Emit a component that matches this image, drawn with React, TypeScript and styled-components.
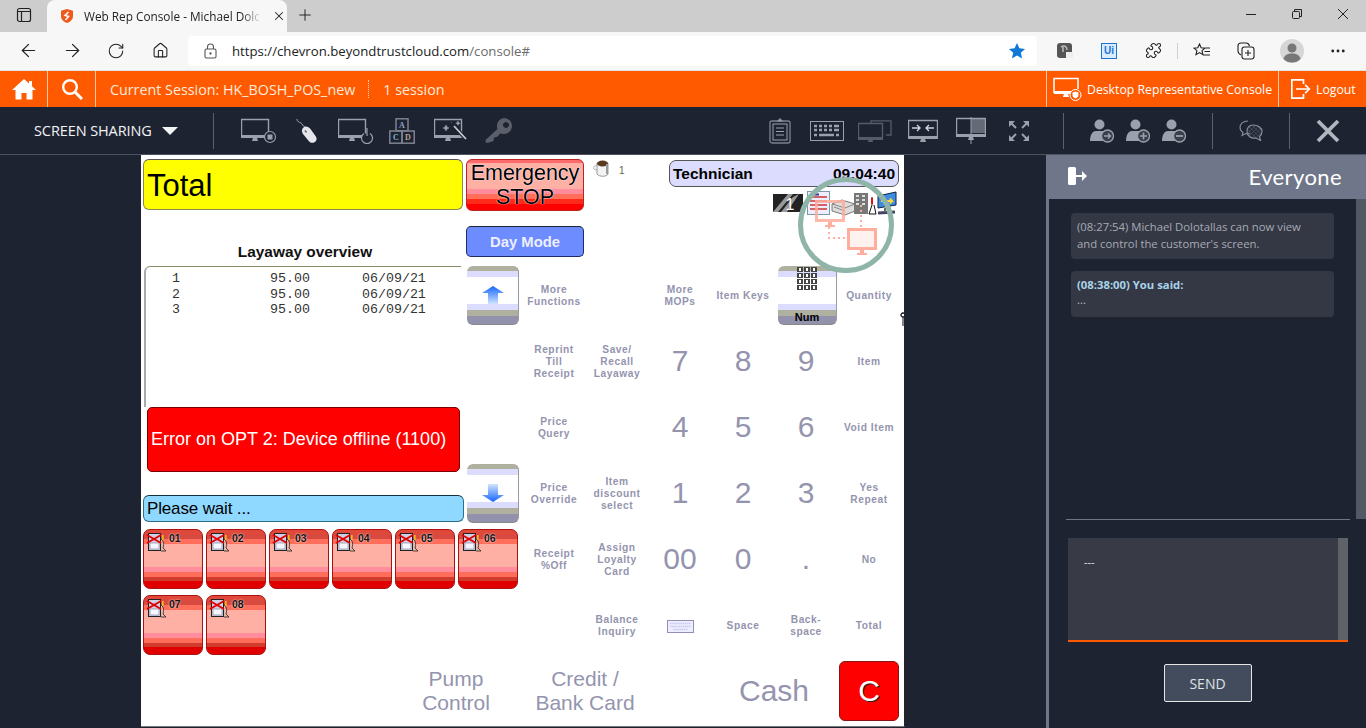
import React from "react";
import styled, { createGlobalStyle } from "styled-components";
import { ArrowLeft, ArrowRight, RotateCw, House, Plus, X, Puzzle, Ellipsis } from "lucide-react";

const Global = createGlobalStyle`
  html, body { margin: 0; padding: 0; height: 728px; overflow: hidden; background: #1e2332; }
  body { font-family: "Open Sans", "Liberation Sans", sans-serif; }
  * { box-sizing: border-box; }
`;

const Page = styled.div`width: 1366px; height: 728px; display: flex; flex-direction: column; overflow: hidden;`;

/* browser chrome */
const TabStrip = styled.div`height: 32px; background: #cdcdcd; display: flex; align-items: flex-end; flex: none; color: #222;`;
const TabSide = styled.div`width: 47px; height: 32px; display: flex; align-items: center; justify-content: center; padding-bottom: 2px;`;
const Tab = styled.div`
  width: 240px; height: 32px; background: #f7f7f7; border-radius: 8px 8px 0 0;
  display: flex; align-items: center; padding-left: 12px; gap: 9px; position: relative;
`;
const TabTitle = styled.div`
  width: 175px; font: 11.8px "Open Sans", sans-serif; color: #222; white-space: nowrap;
  -webkit-mask-image: linear-gradient(90deg, #000 90%, rgba(0,0,0,.15) 100%);
  mask-image: linear-gradient(90deg, #000 90%, rgba(0,0,0,.15) 100%);
`;
const TabClose = styled.div`display: flex; margin-left: 4px; color: #222;`;
const NewTab = styled.div`width: 36px; height: 32px; display: flex; align-items: center; justify-content: center; padding-bottom: 2px;`;
const WindowControls = styled.div`margin-left: auto; display: flex; height: 32px; align-items: center; gap: 36px; padding: 0 18px 4px 0;`;

const AddressRow = styled.div`
  height: 39px; flex: none; background: #f7f7f7; border-bottom: 1px solid #e2e2e2;
  display: flex; align-items: center; color: #222; padding-bottom: 1px;
`;
const NavButton = styled.div<{ $w: number }>`width: ${p => p.$w}px; display: flex; justify-content: center; align-items: center; flex: none;`;
const NavGroup = styled.div`display: flex; width: 188px; padding-left: 6px; flex: none;`;
const Omnibox = styled.div`
  width: 849px; height: 30px; background: #fff; border-radius: 4px; display: flex; align-items: center;
  padding: 0 11px 0 16px; flex: none;
`;
const Url = styled.div`margin-left: 15px; font: 13.2px "Open Sans", sans-serif; color: #222; flex: 1; white-space: nowrap;`;
const UrlDim = styled.span`color: #6b6b6b;`;
const ExtBar = styled.div`display: flex; align-items: center; margin-left: 6px;`;
const Sep = styled.div`width: 1px; height: 16px; background: #cfcfcf; flex: none; margin-left: 2px;`;
const UiBadge = styled.div`
  width: 16px; height: 16px; border: 1.5px solid #1a73d8; color: #1a73d8; font: bold 10px "Liberation Sans", sans-serif;
  display: flex; align-items: center; justify-content: center; background: #dcecff;
`;

/* orange bar */
const OrangeBar = styled.div`height: 36px; flex: none; background: #ff5a00; display: flex; align-items: stretch; color: #fff;`;
const OrangeCell = styled.div<{ $w: number }>`
  width: ${p => p.$w}px; border-right: 1px solid #ffc7a3; display: flex; align-items: center; justify-content: center; flex: none;
`;
const SessionText = styled.div`margin-left: 14px; font-size: 14.3px; display: flex; align-items: center; white-space: nowrap; color: #ffeadb;`;
const DotSep = styled.div`width: 0; height: 18px; border-left: 1px dotted #ffd3b8; margin: 0 14px 0 13px;`;
const OrangeRight = styled.div`margin-left: auto; display: flex;`;
const OrangeLink = styled.div<{ $w: number; $gap: number }>`
  width: ${p => p.$w}px; border-left: 1px solid #ffc7a3; display: flex; align-items: center; padding-left: 6px;
  gap: ${p => p.$gap}px; font-size: 12.25px; white-space: nowrap; color: #fff;
`;

/* toolbar */
const Toolbar = styled.div`
  height: 48px; flex: none; background: #1e2332; border-bottom: 1px solid #4d5260; display: flex; align-items: center; position: relative;
`;
const ModeLabel = styled.div`
  margin-left: 34px; width: 179px; display: flex; align-items: center; gap: 10px; color: #f2f3f5; font-size: 14.5px; white-space: nowrap; letter-spacing: -.1px;
`;
const Caret = styled.div`width: 0; height: 0; border-left: 8px solid transparent; border-right: 8px solid transparent; border-top: 8px solid #f2f3f5;`;
const VLine = styled.div<{ $ml: number }>`width: 1px; height: 36px; background: #596071; margin-left: ${p => p.$ml}px; flex: none;`;
const ToolIcon = styled.svg<{ $ml: number }>`margin-left: ${p => p.$ml}px; flex: none; display: block;`;

const C = "#9ba0ad";
const Screen = ({ w = 27, h = 19, x = 1, y = 1, c = C }: { w?: number; h?: number; x?: number; y?: number; c?: string }) => (
  <g>
    <path d={`M${x + .5} ${y + h - 3}V${y + .5}H${x + w - .5}V${y + h - 3}`} fill="none" stroke={c} strokeWidth="1.4" />
    <rect x={x} y={y + h - 4} width={w} height="3" fill={c} />
    <path d={`M${x + w / 2 - 2} ${y + h - 1}h4l1 3h-6z`} fill={c} />
  </g>
);

/* main */
const Main = styled.div`flex: 1; display: flex; min-height: 0;`;
const Stage = styled.div`width: 1046px; padding-left: 141px; flex: none; background: #1e2332;`;
const Pos = styled.div`
  width: 764px; height: 572px; background: #fff; padding: 4px 0 0 2px; position: relative; overflow: hidden;
  border-right: 1px solid #222; border-bottom: 1px solid #777;
  display: grid; align-content: start; justify-content: start;
  grid-template-columns: repeat(6, 63px) 3px repeat(6, 63px);
  grid-template-rows: 106px repeat(7, 66px);
  font-family: "Liberation Sans", Arial, sans-serif;
`;
const TotalBox = styled.div`
  grid-area: 1 / 1 / 2 / 7; align-self: start; width: 320px; height: 51px; background: #ffff00; border-radius: 6px;
  border: 1px solid #8a8a50; border-top-color: #555; display: flex; align-items: center; padding: 2px 0 0 3px;
  font-size: 31px; color: #000;
`;
const LayawayTitle = styled.div`
  grid-area: 1 / 1 / 2 / 7; align-self: end; width: 324px; text-align: center; font-weight: bold; font-size: 15.4px; color: #111; padding-bottom: 4px;
`;
const EmergencyBtn = styled.div`
  grid-area: 1 / 6 / 2 / 9; align-self: start; margin-left: 8px; width: 118px; height: 52px; border-radius: 6px; border: 1px solid #b22;
  background: linear-gradient(#ff6a6a 0 3px, #ffb0a5 3px 29px, #ff8d9d 29px 34px, #ff6e5a 34px 39px, #ff2a1a 39px 44px, #f00 44px);
  display: flex; align-items: center; justify-content: center; text-align: center; font-size: 21.5px; line-height: 24px; color: #000;
  text-shadow: 0 0 1px #fff, 0 0 1px #fff;
`;
const DayBtn = styled.div`
  grid-area: 1 / 6 / 2 / 9; align-self: start; margin: 67px 0 0 8px; width: 118px; height: 31px; border-radius: 5px; background: #6c8cff;
  border: 1px solid #1d2b66; border-top-color: #223; color: #eef; font-weight: bold; font-size: 14.8px;
  display: flex; align-items: center; justify-content: center;
`;
const CupWrap = styled.div`
  grid-area: 1 / 8 / 2 / 10; align-self: start; margin-left: 69px; display: flex; align-items: flex-start; gap: 8px;
  font-size: 10px; color: #666646; white-space: nowrap; line-height: 24px;
`;
const TechBar = styled.div`
  grid-area: 1 / 10 / 2 / 14; align-self: start; margin: 1px 0 0 19px; width: 230px; height: 27px; border-radius: 7px; background: #dcdcff;
  border: 1px solid #555; display: flex; justify-content: space-between; align-items: center; padding: 0 3px 0 3px;
  font-weight: bold; font-size: 15.5px; color: #000;
`;
const StatusRow = styled.div`
  grid-area: 1 / 10 / 2 / 14; align-self: start; margin: 31px 0 0 123px; display: flex;
`;
const LeftColumn = styled.div`grid-area: 2 / 1 / 6 / 7; display: flex; flex-direction: column;`;
const ListBox = styled.div`
  margin: 1px 0 0 1px; width: 317px; height: 141px; border-top: 1px solid #8b8b66; border-left: 2px solid #aaa; border-top-left-radius: 6px;
  padding: 4px 0 0 26px; font: 13.3px/15.5px "Liberation Mono", monospace; color: #333;
`;
const ListRow = styled.div`display: grid; grid-template-columns: 98px 92px auto;`;
const ErrorBox = styled.div`
  margin-left: 4px; width: 313px; height: 65px; background: #ff0000; border-radius: 5px; border: 1px solid #700; display: flex; align-items: center;
  padding-left: 3px; font-size: 18px; color: #fff; white-space: nowrap;
`;
const WaitBox = styled.div`
  margin-top: 23px; width: 321px; height: 27px; background: #8fd8ff; border-radius: 6px; border: 1px solid #2d6f86; border-top-color: #134;
  display: flex; align-items: center; padding-left: 3px; font-size: 17px; letter-spacing: -.15px; color: #000;
`;
const stripes = "linear-gradient(#b0b09e 0 5px, #dcdcff 5px 11px, #fff 11px 38px, #dcdcff 38px 44px, #b0b09e 44px 50px, #9292ac 50px)";
const FnButton = styled.div<{ $col: number; $row: number; $w: number; $ml: number }>`
  grid-column: ${p => p.$col} / span 2; grid-row: ${p => p.$row}; justify-self: start; margin: 1px 0 0 ${p => p.$ml}px; width: ${p => p.$w}px; height: 59px;
  background: ${stripes}; border-radius: 6px; border-right: 1px solid #9a9a9a; border-bottom: 1px solid #888;
  display: flex; flex-direction: column; align-items: center; font-weight: bold; font-size: 11px; color: #000; position: relative;
`;
const ArrowSlot = styled.svg`margin-top: 20px;`;
const NumIcon = styled.svg`margin-top: 1px;`;
const NumText = styled.div`margin-top: auto; line-height: 14px;`;
const PumpTile = styled.div<{ $col: number; $row: number }>`
  grid-column: ${p => p.$col}; grid-row: ${p => p.$row}; width: 60px; height: 60px; border-radius: 7px; border: 1px solid #a11;
  background: linear-gradient(#e0483a 0 4px, #d84a40 4px 9px, #ff6e5a 9px 14px, #ffb0a5 14px 37px, #ff8d9d 37px 42px, #ff6e5a 42px 47px, #d23c2e 47px 51px, #e00000 51px);
  display: flex; padding: 1px 0 0 1px; font-weight: bold; font-size: 10.5px; color: #111; text-shadow: 0 0 2px #fff;
`;
const PumpNo = styled.div`margin-left: 2px; line-height: 14px;`;
const KeyCell = styled.div<{ $col: number; $row: number; $big?: boolean }>`
  grid-column: ${p => p.$col}; grid-row: ${p => p.$row}; width: 60px; height: 60px; display: flex; align-items: center; justify-content: center; text-align: center;
  color: #9494ae; white-space: pre-line; padding-top: ${p => (p.$big ? "0" : "2px")};
  font-weight: ${p => (p.$big ? "normal" : "bold")}; font-size: ${p => (p.$big ? "30px" : "10.2px")};
  letter-spacing: ${p => (p.$big ? "0" : ".55px")}; line-height: ${p => (p.$big ? "30px" : "12px")};
`;
const WideKey = styled.div<{ $col: number; $size: number }>`
  grid-column: ${p => p.$col} / span 2; grid-row: 8; height: 60px; margin-left: -4px; display: flex; align-items: center; justify-content: center; text-align: center;
  color: #9494ae; font-size: ${p => p.$size}px; line-height: 24px; white-space: pre-line;
`;
const ClearBtn = styled.div`
  grid-column: 13; grid-row: 8; width: 60px; height: 60px; border-radius: 6px; background: #ff0000; border: 1px solid #811;
  display: flex; align-items: center; justify-content: center; font-size: 30px; color: #fff; text-shadow: 1px 1px 0 #222;
`;
const Watermark = styled.svg`position: absolute; left: 654px; top: 22px; pointer-events: none;`;
const CursorMark = styled.svg`position: absolute; left: 759px; top: 157px;`;

/* chat */
const ChatPanel = styled.div`width: 320px; flex: none; background: #1e2332; border-left: 3px solid #6f7689; display: flex; flex-direction: column;`;
const ChatHeader = styled.div`
  height: 44px; background: #6f7689; flex: none; display: flex; align-items: center; justify-content: space-between; padding: 0 24px 2px 22px; margin-left: -3px;
  font: 400 22px Lato, "Open Sans", sans-serif; color: #fff; letter-spacing: .4px;
`;
const ChatBody = styled.div`height: 320px; display: flex; flex: none;`;
const ChatLog = styled.div`flex: 1; padding: 14px 22px 0 22px; display: flex; flex-direction: column; gap: 12px;`;
const ChatScroll = styled.div`width: 10px; background: #545864; flex: none;`;
const Bubble = styled.div`
  width: 263px; height: 46px; background: #343845; border-radius: 4px; padding: 5px 16px 0 6px; font-size: 11.3px; line-height: 17px; color: #a7aab3;
`;
const BubbleHead = styled.div`font-weight: bold; color: #a9d3e8;`;
const BubbleText = styled.div`color: #b9bcc5; line-height: 13px;`;
const ChatRule = styled.div`height: 1px; background: #6f7689; margin: 0 16px 0 17px; flex: none;`;
const Composer = styled.div`
  margin: 18px 18px 0 19px; height: 104px; background: #383b46; border-bottom: 2px solid #ff5a00; display: flex; flex: none; justify-content: space-between;
  padding: 16px 0 0 16px; font-size: 11px; color: #e6e6e6; line-height: 16px;
`;
const ComposerBar = styled.div`width: 10px; margin-top: -16px; height: 102px; background: #5f6269;`;
const SendRow = styled.div`display: flex; justify-content: center; margin: 22px 0 0 0;`;
const SendBtn = styled.div`
  width: 88px; height: 38px; background: #434c5c; border: 1px solid #e6e6e6; border-radius: 2px; display: flex; align-items: center; justify-content: center;
  font-size: 14px; color: #dfe2e7;
`;

const Pump = () => (
  <svg width="22" height="22" viewBox="0 0 22 22">
    <rect x="3.500" y="2.500" width="12" height="17" fill="#cfd0e6" stroke="#222" />
    <rect x="5" y="12" width="9" height="6" fill="#f6f6ff" stroke="#8a8aa0" strokeWidth=".7" />
    <path d="M16 8c3 2 3 6 2 9l3 3h-5" fill="#e6b8a8" stroke="#222" strokeWidth=".8" />
    <rect x="17" y="4" width="1.600" height="5" fill="#e7c21c" />
    <path d="M2 4l14 8M16 4L2 12" stroke="#e00000" strokeWidth="2" />
  </svg>
);

const right: [number, number, string, boolean?][] = [
  [8, 2, "More\nFunctions"], [10, 2, "More\nMOPs"], [11, 2, "Item Keys"], [13, 2, "Quantity"],
  [8, 3, "Reprint\nTill\nReceipt"], [9, 3, "Save/\nRecall\nLayaway"], [10, 3, "7", true], [11, 3, "8", true], [12, 3, "9", true], [13, 3, "Item"],
  [8, 4, "Price\nQuery"], [10, 4, "4", true], [11, 4, "5", true], [12, 4, "6", true], [13, 4, "Void Item"],
  [8, 5, "Price\nOverride"], [9, 5, "Item\ndiscount\nselect"], [10, 5, "1", true], [11, 5, "2", true], [12, 5, "3", true], [13, 5, "Yes\nRepeat"],
  [8, 6, "Receipt\n%Off"], [9, 6, "Assign\nLoyalty\nCard"], [10, 6, "00", true], [11, 6, "0", true], [12, 6, ".", true], [13, 6, "No"],
  [9, 7, "Balance\nInquiry"], [11, 7, "Space"], [12, 7, "Back-\nspace"], [13, 7, "Total"],
];

const UserIcon = ({ sign, ml }: { sign: "go" | "plus" | "minus"; ml: number }) => (
  <ToolIcon $ml={ml} width="24" height="24" viewBox="0 0 24 24">
    <circle cx="9.500" cy="5.500" r="5" fill={C} />
    <path d="M0 22c0-7 3-10 6-10h7c3 0 5 2 6 6v4z" fill={C} />
    <circle cx="17.500" cy="17" r="6" fill="#3b3f4c" stroke={C} strokeWidth="1.300" />
    {sign === "go" && <path d="M14 17h6.500M18 14.500l2.500 2.500-2.500 2.500" stroke={C} strokeWidth="1.400" fill="none" />}
    {sign === "plus" && <path d="M14 17h7M17.500 13.500v7" stroke={C} strokeWidth="1.600" />}
    {sign === "minus" && <path d="M14 17h7" stroke={C} strokeWidth="1.800" />}
  </ToolIcon>
);

export default function App() {
  return (
    <Page>
      <Global />
      <TabStrip>
        <TabSide>
          <svg width="16" height="16" viewBox="0 0 16 16" fill="none" stroke="#222" strokeWidth="1.200"><rect x="1.500" y="1.500" width="13" height="13" rx="2" /><path d="M1.500 4.500h13M5.500 4.500v10" /></svg>
        </TabSide>
        <Tab>
          <svg width="16" height="16" viewBox="0 0 16 16"><path d="M8 1l6 1.800V8c0 3.500-2.600 5.800-6 7-3.400-1.200-6-3.500-6-7V2.800z" fill="#ee5a1c" /><path d="M9.500 4L6 7.500l3.500 1L6.500 12" fill="none" stroke="#fff" strokeWidth="1.500" /></svg>
          <TabTitle>Web Rep Console - Michael Dolo</TabTitle>
          <TabClose><X size={14} strokeWidth={1.800} /></TabClose>
        </Tab>
        <NewTab><Plus size={18} strokeWidth={1.300} /></NewTab>
        <WindowControls>
          <svg width="10" height="10" viewBox="0 0 10 10" stroke="#222" fill="none"><path d="M0 5.500h10" /></svg>
          <svg width="10" height="10" viewBox="0 0 10 10" fill="none" stroke="#222"><rect x=".5" y="2.500" width="7" height="7" rx="1" /><path d="M2.500 2.500V.5h7V7.500H7.500" /></svg>
          <svg width="10" height="10" viewBox="0 0 10 10" stroke="#222" fill="none"><path d="M0 0l10 10M10 0L0 10" /></svg>
        </WindowControls>
      </TabStrip>
      <AddressRow>
        <NavGroup>
          <NavButton $w={44}><ArrowLeft size={21} strokeWidth={1.400} /></NavButton>
          <NavButton $w={44}><ArrowRight size={21} strokeWidth={1.400} /></NavButton>
          <NavButton $w={44}><RotateCw size={18} strokeWidth={1.400} /></NavButton>
          <NavButton $w={44}><House size={17} strokeWidth={1.500} /></NavButton>
        </NavGroup>
        <Omnibox>
          <svg width="13" height="16" viewBox="0 0 13 16" fill="none" stroke="#555" strokeWidth="1.100"><rect x="1" y="6" width="11" height="9" rx="1.500" /><path d="M3.500 6V4a3 3 0 0 1 6 0v2" /><circle cx="6.500" cy="10.500" r=".6" fill="#555" /></svg>
          <Url>https://chevron.beyondtrustcloud.com<UrlDim>/console#</UrlDim></Url>
          <svg width="18" height="18" viewBox="0 0 18 18"><path d="M9 1l2.400 5.300 5.700.6-4.300 3.800 1.300 5.700L9 13.500l-5.100 2.900 1.300-5.700L.9 6.900l5.700-.6z" fill="#0f78d4" /></svg>
        </Omnibox>
        <ExtBar>
          <NavButton $w={44}>
            <svg width="16" height="16" viewBox="0 0 16 16"><rect width="15" height="15" rx="3" fill="#555" /><path d="M4 4c3-2 6-1 6 3M6 4v5" stroke="#bbb" fill="none" strokeWidth="1.500" /><rect x="9" y="9" width="7" height="6" fill="#eee" /></svg>
          </NavButton>
          <NavButton $w={44}><UiBadge>Ui</UiBadge></NavButton>
          <NavButton $w={44}><Puzzle size={17} strokeWidth={1.500} /></NavButton>
          <Sep />
          <NavButton $w={48}>
            <svg width="18" height="17" viewBox="0 0 18 17" fill="none" stroke="#222" strokeWidth="1.100"><path d="M6.500 2l1.600 3.700 3.900.4-3 2.600.9 4-3.400-2.100L3 12.700l.9-4-3-2.600 3.900-.4zM12.500 6H17M11.500 9.500H17M10.500 13H17" /></svg>
          </NavButton>
          <NavButton $w={39}>
            <svg width="18" height="18" viewBox="0 0 18 18" fill="none" stroke="#222" strokeWidth="1.100"><path d="M4 13c-2-1-3-2-3-4V4a3 3 0 0 1 3-3h5c2 0 3 1 3.500 3" /><rect x="5" y="5" width="12" height="12" rx="2.500" /><path d="M11 8v6M8 11h6" /></svg>
          </NavButton>
          <NavButton $w={54}>
            <svg width="24" height="24" viewBox="0 0 24 24"><circle cx="12" cy="12" r="12" fill="#d6d6d6" /><circle cx="12" cy="9" r="4.500" fill="#777" /><path d="M3.500 20c1-4 4-5.500 8.500-5.500s7.500 1.500 8.500 5.500a12 12 0 0 1-17 0z" fill="#777" /></svg>
          </NavButton>
          <NavButton $w={38}><Ellipsis size={18} strokeWidth={1.800} /></NavButton>
        </ExtBar>
      </AddressRow>

      <OrangeBar>
        <OrangeCell $w={48}>
          <svg width="24" height="22" viewBox="0 0 24 22" fill="#fff"><path d="M12 1L0 12h3.500v9.500h6V15h5v6.500h6V12H24l-4-3.700V3h-3v2.500z" /></svg>
        </OrangeCell>
        <OrangeCell $w={48}>
          <svg width="22" height="22" viewBox="0 0 22 22" fill="none" stroke="#fff" strokeWidth="2.400"><circle cx="9" cy="9" r="6.800" /><path d="M14 14l7 7" strokeWidth="3" /></svg>
        </OrangeCell>
        <SessionText>Current Session: HK_BOSH_POS_new<DotSep />1 session</SessionText>
        <OrangeRight>
          <OrangeLink $w={232} $gap={5}>
            <svg width="29" height="26" viewBox="0 0 29 26" fill="none" stroke="#fff"><path d="M1 17V2.500h24V13" strokeWidth="1.500" /><rect x="1" y="15" width="18" height="3" fill="#fff" stroke="none" /><path d="M11 18h4l1 3h-6z" fill="#fff" stroke="none" /><circle cx="22.500" cy="19" r="5.500" strokeWidth="1" fill="#ff5a00" /><path d="M22.500 15.500l3 1v2.500c0 2-1.500 3-3 3.500-1.500-.5-3-1.500-3-3.500v-2.500z" fill="#fff" stroke="none" /></svg>
            Desktop Representative Console
          </OrangeLink>
          <OrangeLink $w={88} $gap={5}>
            <svg width="20" height="20" viewBox="0 0 24 24" fill="none" stroke="#fff" strokeWidth="2" style={{ marginLeft: 6 }}><path d="M15 6V1H1v22h14v-5M6 12h16M17 7l5 5-5 5" /></svg>
            Logout
          </OrangeLink>
        </OrangeRight>
      </OrangeBar>

      <Toolbar>
        <ModeLabel>SCREEN SHARING <Caret /></ModeLabel>
        <VLine $ml={0} />
        <ToolIcon $ml={27} width="36" height="26" viewBox="0 0 36 26">
          <Screen w={28} h={20} x={0} y={1} />
          <circle cx="29" cy="19" r="5.500" fill="#1e2332" stroke={C} strokeWidth="1.200" /><rect x="26.500" y="16.500" width="5" height="5" fill={C} />
        </ToolIcon>
        <ToolIcon $ml={19} width="22" height="26" viewBox="0 0 22 26">
          <path d="M1 1c0 3 2 3 4 4s1 3 4 4" fill="none" stroke={C} strokeWidth="1" />
          <path d="M7.500 9.500c2-2 5-1 7 1.500l5 7c2 3 1 5-1 6.200s-4 .8-6-1.500L7 16c-1.500-2.500-1.500-5 .5-6.500z" fill="#e4e6eb" />
          <path d="M9 12.500l1.500 2" stroke="#666" strokeWidth="1.500" />
        </ToolIcon>
        <ToolIcon $ml={20} width="36" height="26" viewBox="0 0 36 26">
          <Screen w={28} h={20} x={0} y={1} />
          <path d="M26 15.500a5.500 5.500 0 1 0 6 0" fill="#1e2332" stroke={C} strokeWidth="1.200" /><path d="M29 10v8" stroke={C} strokeWidth="1.200" />
        </ToolIcon>
        <ToolIcon $ml={15} width="26" height="26" viewBox="0 0 26 26">
          <g fill="none" stroke="#7d8290" strokeWidth="1.500"><rect x="7" y=".8" width="12" height="12" /><rect x=".8" y="13" width="12.200" height="12.200" /><rect x="13" y="13" width="12.200" height="12.200" /></g>
          <text x="13" y="10" textAnchor="middle" fontSize="8" fontFamily="Liberation Serif" fontWeight="bold" fill="#8fa4c8">A</text>
          <text x="7" y="22" textAnchor="middle" fontSize="8" fontFamily="Liberation Serif" fontWeight="bold" fill="#7fb4c8">C</text>
          <text x="19" y="22" textAnchor="middle" fontSize="8" fontFamily="Liberation Serif" fontWeight="bold" fill="#b8a48f">D</text>
        </ToolIcon>
        <ToolIcon $ml={19} width="36" height="26" viewBox="0 0 36 26">
          <Screen w={28} h={20} x={0} y={1} />
          <path d="M20 8l13 14" stroke="#1e2332" strokeWidth="4" /><path d="M20 8l12 13" stroke="#c7cad2" strokeWidth="1.800" />
          <path d="M12 7l1 2 2 1-2 1-1 2-1-2-2-1 2-1zM24 3l.7 1.500 1.500.7-1.500.7-.7 1.500-.7-1.500-1.500-.7 1.500-.7zM17 4.500h1" fill={C} stroke={C} strokeWidth=".5" />
        </ToolIcon>
        <ToolIcon $ml={15} width="28" height="26" viewBox="0 0 28 26">
          <path fillRule="evenodd" d="M19 0a8 8 0 1 1-3.500 15.200L12 19l-3 .5L8.500 23 4 24.500 1 25l-.5-3L12.500 11A8 8 0 0 1 19 0zm2 4a3 3 0 1 0 .01 0z" fill="#5b5f6c" />
        </ToolIcon>

        <ToolIcon $ml={256} width="22" height="26" viewBox="0 0 22 26" fill="none" stroke="#7d8290">
          <rect x="1" y="3" width="20" height="22" rx="2" strokeWidth="1.300" /><rect x="4" y="6" width="14" height="16" stroke={C} />
          <path d="M8 3.500L11 .5l3 3z" fill={C} /><path d="M7 10h8M7 13.500h8M7 17h8" stroke={C} strokeWidth="1.200" />
        </ToolIcon>
        <ToolIcon $ml={19} width="34" height="20" viewBox="0 0 34 20">
          <rect x=".5" y=".5" width="33" height="19" fill="none" stroke={C} />
          <path d="M4 5h3M9 5h3M14 5h3M19 5h3M24 5h5M4 9h3M9 9h3M14 9h3M19 9h3M24 9h5M4 14h3M9 14h15M26 14h3" stroke={C} strokeWidth="2.600" />
        </ToolIcon>
        <ToolIcon $ml={14} width="34" height="22" viewBox="0 0 34 22">
          <path d="M13 3V.8h20V15h-5" fill="none" stroke="#575b68" strokeWidth="1.300" />
          <Screen w={25} h={18} x={0} y={3} c="#575b68" />
        </ToolIcon>
        <ToolIcon $ml={16} width="30" height="24" viewBox="0 0 30 24">
          <Screen w={30} h={20} x={0} y={1} />
          <path d="M4 9h8M9 6l3 3-3 3M26 9h-8M21 6l-3 3 3 3" fill="none" stroke="#cfd2da" strokeWidth="1.400" />
        </ToolIcon>
        <ToolIcon $ml={18} width="30" height="28" viewBox="0 0 30 28">
          <rect x="15" y="1" width="14" height="15" fill="#666a76" />
          <Screen w={30} h={20} x={0} y={1} />
          <path d="M15 0v27" stroke={C} />
        </ToolIcon>
        <ToolIcon $ml={22} width="22" height="22" viewBox="0 0 22 22">
          <path d="M1 1h6L1 7zM21 1h-6l6 6zM1 21h6l-6-6zM21 21h-6l6-6z" fill={C} /><path d="M3 3l5 5M19 3l-5 5M3 19l5-5M19 19l-5-5" stroke={C} strokeWidth="2" />
        </ToolIcon>
        <VLine $ml={33} />
        <UserIcon sign="go" ml={26} />
        <UserIcon sign="plus" ml={12} />
        <UserIcon sign="minus" ml={12} />
        <VLine $ml={26} />
        <ToolIcon $ml={26} width="24" height="22" viewBox="0 0 24 22" fill="none" stroke="#8a8f9c" strokeWidth="1.100">
          <defs><pattern id="net" width="3" height="3" patternUnits="userSpaceOnUse" patternTransform="rotate(45)"><path d="M0 0h3M0 0v3" stroke="#7d8290" strokeWidth=".6" /></pattern></defs>
          <path d="M9 1C4 1 1 4 1 7.500c0 2.500 1.500 4 3 5l-1 3 4-2c1 .3 3 .3 4 0" />
          <path d="M14 5c5 0 9 2.500 9 6.500 0 2.500-1 4-2.500 5l1 4-4.500-2.500c-5 .8-9-2-9-6.500C8 8 10 5 14 5z" fill="url(#net)" />
        </ToolIcon>
        <VLine $ml={26} />
        <ToolIcon $ml={26} width="24" height="24" viewBox="0 0 24 24">
          <path d="M2 2l20 20M22 2L2 22" stroke="#b2b6c0" strokeWidth="3.800" />
        </ToolIcon>
      </Toolbar>

      <Main>
        <Stage>
          <Pos>
            <TotalBox>Total</TotalBox>
            <LayawayTitle>Layaway overview</LayawayTitle>
            <EmergencyBtn>Emergency<br />STOP</EmergencyBtn>
            <DayBtn>Day Mode</DayBtn>
            <CupWrap>
              <svg width="18" height="19" viewBox="0 0 18 19"><path d="M4 4h11v11c-1 3-9 3-11 0z" fill="#f3f3f3" stroke="#999" /><ellipse cx="9.500" cy="4.500" rx="5.500" ry="3" fill="#5a3a1e" /><path d="M4 7C1 6 0 9 1 10s3 1 3 1" fill="none" stroke="#aaa" /><path d="M13 5h2v10h-2z" fill="#999" /></svg>
              1
            </CupWrap>
            <TechBar><span>Technician</span><span>09:04:40</span></TechBar>
            <StatusRow>
              <svg width="127" height="27" viewBox="0 0 127 27">
                <rect x="0" y="4" width="30" height="18" fill="#222" /><path d="M0 22L15 4h5L5 22zM8 22L20 7 26 4 14 22z" fill="#999" />
                <text x="17" y="20" textAnchor="middle" fontSize="16" fontFamily="Liberation Sans" fill="#fff">1</text>
                <rect x="34.500" y="1.500" width="22" height="23" fill="#eef" stroke="#79a" /><path d="M37 7h17M37 11h17M37 15h17M37 19h17" stroke="#c33" strokeWidth="1.300" /><path d="M37 4.500h9" stroke="#33a" strokeWidth="2" />
                <path d="M59 14l10-4 13 4v7l-10 4-13-4z" fill="#ddd" stroke="#777" /><path d="M59 14l13 4 10-4M61 17l11 4" stroke="#888" fill="none" />
                <rect x="81" y="3" width="14" height="21" fill="#777" /><path d="M83 6h3M89 6h3M83 10h3M89 10h3M83 14h3M89 14h3" stroke="#ddd" strokeWidth="2" /><path d="M99 7v8l-3 9h7l-2-9" fill="#fff" stroke="#111" /><path d="M98 8h2v6h-2z" fill="#d11" />
                <path d="M105 6l18-4v13l-18 3z" fill="#3c8de0" stroke="#124" /><path d="M108 11h11l-2-2.500M119 11l-2 2.500" stroke="#ffd83a" strokeWidth="2" fill="none" /><path d="M105 23l17-1" stroke="#446" strokeWidth="3" /><path d="M112 18v4" stroke="#667" strokeWidth="2" />
              </svg>
            </StatusRow>
            <LeftColumn>
              <ListBox>
                {[1, 2, 3].map(n => <ListRow key={n}><span>{n}</span><span>95.00</span><span>06/09/21</span></ListRow>)}
              </ListBox>
              <ErrorBox>Error on OPT 2: Device offline (1100)</ErrorBox>
              <WaitBox>Please wait ...</WaitBox>
            </LeftColumn>
            <FnButton $col={6} $row={2} $w={52} $ml={9}>
              <ArrowSlot width="24" height="18" viewBox="0 0 24 18"><defs><linearGradient id="up" x1="0" y1="0" x2="0" y2="1"><stop offset="0" stopColor="#1566ff" /><stop offset="1" stopColor="#cfe4ff" /></linearGradient></defs><path d="M12 0l11 7h-6v11H7V7H1z" fill="url(#up)" /></ArrowSlot>
            </FnButton>
            <FnButton $col={6} $row={5} $w={52} $ml={9}>
              <ArrowSlot width="24" height="18" viewBox="0 0 24 18"><defs><linearGradient id="dn" x1="0" y1="0" x2="0" y2="1"><stop offset="0" stopColor="#cfe4ff" /><stop offset="1" stopColor="#1566ff" /></linearGradient></defs><path d="M12 18L1 11h6V0h10v11h6z" fill="url(#dn)" /></ArrowSlot>
            </FnButton>
            <FnButton $col={12} $row={2} $w={59} $ml={2}>
              <NumIcon width="20" height="24" viewBox="0 0 20 24">
                {[0, 6, 12, 18].map(y => [0, 7, 14].map(x => (
                  <g key={`${x}-${y}`}><rect x={x} y={y} width="6" height="5" fill="#444" /><rect x={x + 2} y={y + 1} width="2" height="3" fill="#fff" /></g>
                )))}
              </NumIcon>
              <NumText>Num</NumText>
            </FnButton>
            {[1, 2, 3, 4, 5, 6, 7, 8].map(n => (
              <PumpTile key={n} $col={n <= 6 ? n : n - 6} $row={n <= 6 ? 6 : 7}>
                <Pump />
                <PumpNo>0{n}</PumpNo>
              </PumpTile>
            ))}
            {right.map(([col, row, text, big]) => (
              <KeyCell key={`${col}-${row}`} $col={col} $row={row} $big={big}>{text}</KeyCell>
            ))}
            <KeyCell $col={10} $row={7}>
              <svg width="27" height="13" viewBox="0 0 27 13"><rect x=".5" y=".5" width="26" height="12" fill="#eeeeff" stroke="#8f8fb8" /><path d="M3 3.500h21M3 6.500h21M6 9.500h15" stroke="#c8c8ee" strokeWidth="1.500" strokeDasharray="1.500 .6" /></svg>
            </KeyCell>
            <WideKey $col={5} $size={21}>{"Pump\nControl"}</WideKey>
            <WideKey $col={8} $size={21}>{"Credit /\nBank Card"}</WideKey>
            <WideKey $col={11} $size={30}>Cash</WideKey>
            <ClearBtn>C</ClearBtn>
            <Watermark width="100" height="100" viewBox="0 0 100 100">
              <circle cx="51" cy="48" r="45.500" fill="none" stroke="#8fb5a8" strokeWidth="5" />
              <path fillRule="evenodd" d="M20 23h30v22H20zm3 3v16h24V26z" fill="#ffad9c" fillOpacity=".85" />
              <path d="M33 45h4v3h3v2H30v-2h3z" fill="#ffad9c" />
              <path d="M52 51h30v22H52z" fill="#ffad9c" /><path d="M55 54h24v16H55z" fill="#fff2ee" />
              <path d="M65 73h4v3h3v2H62v-2h3z" fill="#ffad9c" />
              <path d="M34 50v11h18M66 28v23" fill="none" stroke="#ffad9c" strokeWidth="2" strokeDasharray="2 3" />
            </Watermark>
            <CursorMark width="6" height="14" viewBox="0 0 6 14"><circle cx="3" cy="3" r="2" fill="#fff" stroke="#111" strokeWidth="1.300" /><path d="M3 5v9" stroke="#111" /></CursorMark>
          </Pos>
        </Stage>
        <ChatPanel>
          <ChatHeader>
            <svg width="19" height="20" viewBox="0 0 19 20" fill="#fff"><rect x="0" y="1" width="8" height="18" rx="1.500" /><path d="M8 9h6V5l5 5-5 5v-4H8z" /></svg>
            Everyone
          </ChatHeader>
          <ChatBody>
            <ChatLog>
              <Bubble>(08:27:54) Michael Dolotallas can now view and control the customer's screen.</Bubble>
              <Bubble><BubbleHead>(08:38:00) You said:</BubbleHead><BubbleText>...</BubbleText></Bubble>
            </ChatLog>
            <ChatScroll />
          </ChatBody>
          <ChatRule />
          <Composer>---<ComposerBar /></Composer>
          <SendRow><SendBtn>SEND</SendBtn></SendRow>
        </ChatPanel>
      </Main>
    </Page>
  );
}
